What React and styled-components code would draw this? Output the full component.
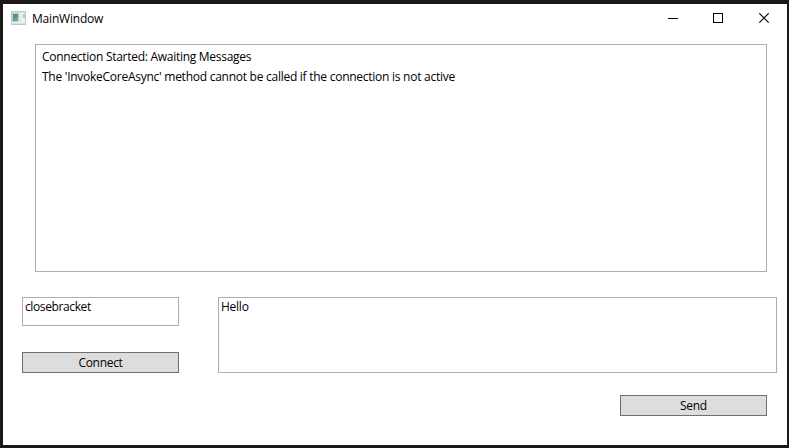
import React from "react";
import styled, { createGlobalStyle } from "styled-components";

const GlobalStyle = createGlobalStyle`
  * { box-sizing: border-box; }
  body { margin: 0; background: #1b1a1b; }
`;

const Window = styled.div`
  width: 789px;
  height: 448px;
  display: flex;
  flex-direction: column;
  background: #fff;
  border: solid #1a191a;
  border-width: 4px 2px 3px 3px;
  font-family: "Open Sans", "Noto Sans", sans-serif;
  font-size: 12px;
  line-height: 16px;
  color: #000;
  overflow: hidden;
`;

const TitleBar = styled.header`
  flex: none;
  height: 30px;
  display: flex;
  align-items: center;
  padding-left: 8px;
`;

const Title = styled.span`
  flex: 1;
  margin-left: 6px;
`;

const CaptionButton = styled.button`
  width: 46px;
  height: 30px;
  display: flex;
  align-items: center;
  justify-content: center;
  padding: 0 0 2px ${(p) => p.$nudge || 0}px;
  border: 0;
  background: transparent;
`;

const CaptionButtons = styled.div`
  display: flex;
`;

const Content = styled.main`
  flex: 1;
  padding: 10px 10px 0 19px;
`;

const MessageList = styled.ul`
  width: 732px;
  height: 228px;
  margin: 0 0 25px 13px;
  padding: 4px 6px;
  border: 1px solid #abadb3;
  list-style: none;
`;

const Message = styled.li`
  height: 20px;
  white-space: nowrap;
`;

const Text = styled.span`
  letter-spacing: ${(p) => p.$spacing || 0}px;
  white-space: nowrap;
`;

const Composer = styled.div`
  display: flex;
  justify-content: space-between;
`;

const Column = styled.div`
  display: flex;
  flex-direction: column;
`;

const Field = styled.div`
  width: ${(p) => p.$width}px;
  height: ${(p) => p.$height}px;
  padding: 1px 2px;
  border: 1px solid #abadb3;
`;

const Button = styled.button`
  width: ${(p) => p.$width}px;
  height: 21px;
  display: flex;
  align-items: center;
  justify-content: center;
  margin: ${(p) => p.$margin};
  padding: 0;
  border: 1px solid #707070;
  background: #ddd;
  color: #000;
  font: inherit;
`;

const IconSlot = styled.span`
  display: flex;
  padding-bottom: 2px;
`;

const AppIcon = () => (
  <svg width="15" height="14" viewBox="0 0 15 14" shapeRendering="crispEdges">
    <defs>
      <linearGradient id="pane" x1="0" y1="0" x2="0.8" y2="1">
        <stop offset="0" stopColor="#4f83b4" />
        <stop offset="0.55" stopColor="#4f9a92" />
        <stop offset="1" stopColor="#7db592" />
      </linearGradient>
    </defs>
    <rect width="15" height="14" fill="#c3c5c9" />
    <rect x="1" y="1" width="13" height="1" fill="#d9dbde" />
    <rect x="1" y="2" width="13" height="10" fill="#f1f2f4" />
    <rect x="1" y="2" width="7" height="9" fill="#b7cdd6" />
    <rect x="2" y="3" width="5" height="7" fill="url(#pane)" />
    <rect x="8" y="3" width="3" height="8" fill="#e9ebef" />
    <rect x="12" y="3" width="2" height="2" fill="#a9cbd6" />
    <rect x="12" y="5" width="2" height="2" fill="#acd0b8" />
    <rect x="1" y="12" width="13" height="1" fill="#dcdde0" />
  </svg>
);

const Glyph = ({ children }) => (
  <svg width="10" height="10" viewBox="0 0 10 10" fill="none" stroke="#000">
    {children}
  </svg>
);

export default function App() {
  return (
    <>
      <GlobalStyle />
      <Window>
        <TitleBar>
          <IconSlot>
            <AppIcon />
          </IconSlot>
          <Title>
            <Text $spacing={-0.2}>MainWindow</Text>
          </Title>
          <CaptionButtons>
            <CaptionButton aria-label="Minimize" $nudge={2}>
              <Glyph>
                <path d="M0 5.5H10" />
              </Glyph>
            </CaptionButton>
            <CaptionButton aria-label="Maximize">
              <Glyph>
                <rect x="0.5" y="0.5" width="9" height="9" />
              </Glyph>
            </CaptionButton>
            <CaptionButton aria-label="Close">
              <Glyph>
                <path d="M0.2 0.2L9.8 9.8M9.8 0.2L0.2 9.8" strokeWidth="1.1" />
              </Glyph>
            </CaptionButton>
          </CaptionButtons>
        </TitleBar>
        <Content>
          <MessageList>
            <Message>
              <Text $spacing={-0.28}>Connection Started: Awaiting Messages</Text>
            </Message>
            <Message>
              <Text $spacing={-0.26}>
                The 'InvokeCoreAsync' method cannot be called if the connection is not active
              </Text>
            </Message>
          </MessageList>
          <Composer>
            <Column>
              <Field $width={157} $height={29}>
                <Text $spacing={-0.38}>closebracket</Text>
              </Field>
              <Button $width={157} $margin="26px 0 0">
                <Text $spacing={-0.3}>Connect</Text>
              </Button>
            </Column>
            <Column>
              <Field $width={559} $height={76}>
                <Text $spacing={-0.25}>Hello</Text>
              </Field>
              <Button $width={147} $margin="22px 10px 0 auto">
                <Text $spacing={-0.3}>Send</Text>
              </Button>
            </Column>
          </Composer>
        </Content>
      </Window>
    </>
  );
}
